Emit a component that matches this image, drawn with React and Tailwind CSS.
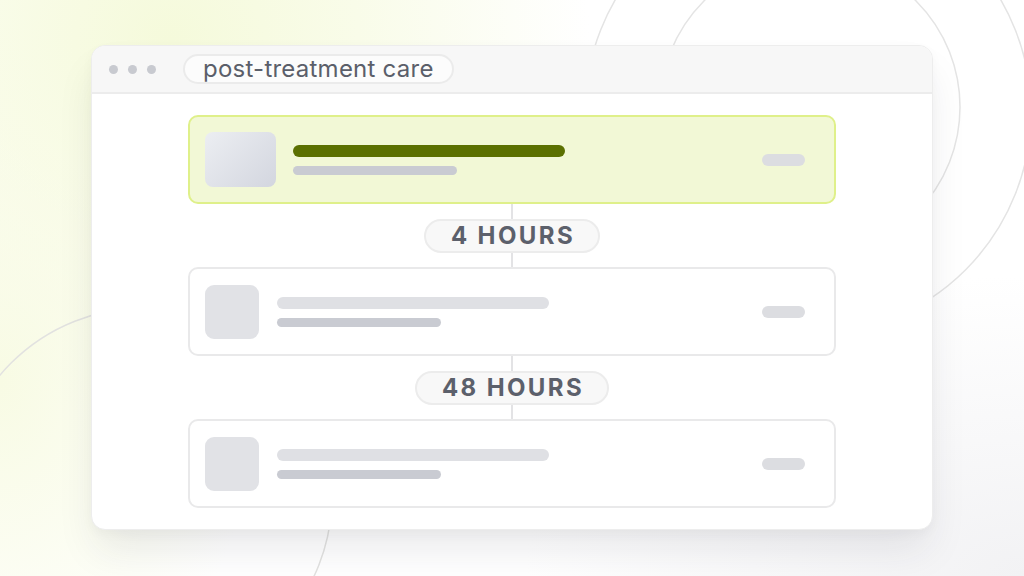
import React from "react";

function Card({ active }) {
  return (
    <div
      className={
        "flex h-[89px] items-center rounded-[10px] border-2 pl-[15px] pr-[29px] " +
        (active ? "border-[#dff08a] bg-[#f2f8d6]" : "border-[#e9e9ea] bg-white")
      }
    >
      {active ? (
        <div className="h-[55px] w-[71px] shrink-0 rounded-[8px] bg-[linear-gradient(135deg,#eceef2_0%,#d3d6df_100%)]" />
      ) : (
        <div className="h-[54px] w-[54px] shrink-0 rounded-[9px] bg-[#e1e2e6]" />
      )}
      <div className={"flex flex-col gap-[9px] " + (active ? "ml-[17px]" : "ml-[18px]")}>
        <div className={"h-[12px] w-[272px] rounded-full " + (active ? "bg-[#5b7000]" : "bg-[#dfe0e4]")} />
        <div className="h-[9px] w-[164px] rounded-full bg-[#c9cbd2]" />
      </div>
      <div className="ml-auto h-[12px] w-[43px] rounded-full bg-[#dcdde1]" />
    </div>
  );
}

function Connector({ label }) {
  return (
    <div className="relative flex h-[63px] items-center justify-center">
      <div className="absolute left-1/2 top-0 h-full w-[2px] -translate-x-1/2 bg-[#e3e3e5]" />
      <div className="relative flex h-[34px] items-center rounded-full border-2 border-[#ececec] bg-[#f8f8f8] pl-[25px] pr-[23px] text-[24px] font-bold tracking-[0.1em] text-[#5c606b]">
        {label}
      </div>
    </div>
  );
}

export default function App() {
  return (
    <div
      className="relative h-[576px] w-[1024px] overflow-hidden bg-white"
      style={{ fontFamily: "Inter, 'Noto Sans', sans-serif" }}
    >
      <div className="absolute inset-0 bg-[radial-gradient(ellipse_420px_380px_at_170px_40px,#f5fadb_0%,#f9fce9_45%,rgba(255,255,255,0)_100%)]" />
      <div className="absolute inset-0 bg-[radial-gradient(ellipse_260px_360px_at_0px_380px,#f8fbe4_0%,rgba(255,255,255,0)_100%)]" />
      <div className="absolute inset-0 bg-[radial-gradient(ellipse_500px_300px_at_1024px_576px,#f2f2f4_0%,rgba(255,255,255,0)_100%)]" />
      <svg className="absolute inset-0" width="1024" height="576" viewBox="0 0 1024 576" fill="none">
        <circle cx="810" cy="107" r="150" stroke="#e4e4e4" strokeWidth="1.5" />
        <circle cx="808" cy="112" r="223" stroke="#e4e4e4" strokeWidth="1.5" />
        <circle cx="144" cy="496" r="188" stroke="#e2e2e0" strokeWidth="1.5" />
      </svg>

      <div className="relative pl-[91px] pt-[45px]">
        <div className="w-[842px] overflow-hidden rounded-[14px] border border-[#ededed] bg-white shadow-[0_24px_40px_-6px_rgba(40,40,60,0.10),0_4px_12px_rgba(0,0,0,0.03)]">
          <div className="flex h-[48px] items-center border-b-2 border-[#ececec] bg-[#f7f7f7] pl-[17px]">
            <div className="flex gap-[10px]">
              <div className="h-[9px] w-[9px] rounded-full bg-[#c8cad0]" />
              <div className="h-[9px] w-[9px] rounded-full bg-[#c8cad0]" />
              <div className="h-[9px] w-[9px] rounded-full bg-[#c8cad0]" />
            </div>
            <div className="ml-[27px] flex h-[30px] items-center rounded-full border-2 border-[#ebebeb] bg-[#fcfcfc] px-[18px] text-[24px] leading-none tracking-[0.01em] text-[#5b5f6a]">
              post-treatment care
            </div>
          </div>
          <div className="px-[96px] pb-[21px] pt-[21px]">
            <Card active />
            <Connector label="4 HOURS" />
            <Card />
            <Connector label="48 HOURS" />
            <Card />
          </div>
        </div>
      </div>
    </div>
  );
}
